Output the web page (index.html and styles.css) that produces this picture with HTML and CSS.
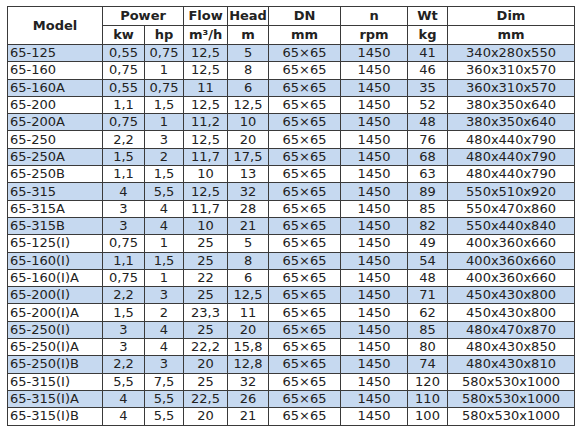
FILE: index.html
```html
<!DOCTYPE html>
<html>
<head>
<meta charset="utf-8">
<link rel="stylesheet" href="styles.css">
</head>
<body>
<table class="spec">
<colgroup>
<col class="c-model"><col class="c-kw"><col class="c-hp"><col class="c-flow"><col class="c-head"><col class="c-dn"><col class="c-n"><col class="c-wt"><col class="c-dim">
</colgroup>
<thead>
<tr><th rowspan="2">Model</th><th colspan="2">Power</th><th>Flow</th><th>Head</th><th>DN</th><th>n</th><th>Wt</th><th>Dim</th></tr>
<tr><th>kw</th><th>hp</th><th>m³/h</th><th>m</th><th>mm</th><th>rpm</th><th>kg</th><th>mm</th></tr>
</thead>
<tbody>
<tr><td>65-125</td><td>0,55</td><td>0,75</td><td>12,5</td><td>5</td><td>65×65</td><td>1450</td><td>41</td><td>340x280x550</td></tr>
<tr><td>65-160</td><td>0,75</td><td>1</td><td>12,5</td><td>8</td><td>65×65</td><td>1450</td><td>46</td><td>360x310x570</td></tr>
<tr><td>65-160A</td><td>0,55</td><td>0,75</td><td>11</td><td>6</td><td>65×65</td><td>1450</td><td>35</td><td>360x310x570</td></tr>
<tr><td>65-200</td><td>1,1</td><td>1,5</td><td>12,5</td><td>12,5</td><td>65×65</td><td>1450</td><td>52</td><td>380x350x640</td></tr>
<tr><td>65-200A</td><td>0,75</td><td>1</td><td>11,2</td><td>10</td><td>65×65</td><td>1450</td><td>48</td><td>380x350x640</td></tr>
<tr><td>65-250</td><td>2,2</td><td>3</td><td>12,5</td><td>20</td><td>65×65</td><td>1450</td><td>76</td><td>480x440x790</td></tr>
<tr><td>65-250A</td><td>1,5</td><td>2</td><td>11,7</td><td>17,5</td><td>65×65</td><td>1450</td><td>68</td><td>480x440x790</td></tr>
<tr><td>65-250B</td><td>1,1</td><td>1,5</td><td>10</td><td>13</td><td>65×65</td><td>1450</td><td>63</td><td>480x440x790</td></tr>
<tr><td>65-315</td><td>4</td><td>5,5</td><td>12,5</td><td>32</td><td>65×65</td><td>1450</td><td>89</td><td>550x510x920</td></tr>
<tr><td>65-315A</td><td>3</td><td>4</td><td>11,7</td><td>28</td><td>65×65</td><td>1450</td><td>85</td><td>550x470x860</td></tr>
<tr><td>65-315B</td><td>3</td><td>4</td><td>10</td><td>21</td><td>65×65</td><td>1450</td><td>82</td><td>550x440x840</td></tr>
<tr><td>65-125(I)</td><td>0,75</td><td>1</td><td>25</td><td>5</td><td>65×65</td><td>1450</td><td>49</td><td>400x360x660</td></tr>
<tr><td>65-160(I)</td><td>1,1</td><td>1,5</td><td>25</td><td>8</td><td>65×65</td><td>1450</td><td>54</td><td>400x360x660</td></tr>
<tr><td>65-160(I)A</td><td>0,75</td><td>1</td><td>22</td><td>6</td><td>65×65</td><td>1450</td><td>48</td><td>400x360x660</td></tr>
<tr><td>65-200(I)</td><td>2,2</td><td>3</td><td>25</td><td>12,5</td><td>65×65</td><td>1450</td><td>71</td><td>450x430x800</td></tr>
<tr><td>65-200(I)A</td><td>1,5</td><td>2</td><td>23,3</td><td>11</td><td>65×65</td><td>1450</td><td>62</td><td>450x430x800</td></tr>
<tr><td>65-250(I)</td><td>3</td><td>4</td><td>25</td><td>20</td><td>65×65</td><td>1450</td><td>85</td><td>480x470x870</td></tr>
<tr><td>65-250(I)A</td><td>3</td><td>4</td><td>22,2</td><td>15,8</td><td>65×65</td><td>1450</td><td>80</td><td>480x430x850</td></tr>
<tr><td>65-250(I)B</td><td>2,2</td><td>3</td><td>20</td><td>12,8</td><td>65×65</td><td>1450</td><td>74</td><td>480x430x810</td></tr>
<tr><td>65-315(I)</td><td>5,5</td><td>7,5</td><td>25</td><td>32</td><td>65×65</td><td>1450</td><td>120</td><td>580x530x1000</td></tr>
<tr><td>65-315(I)A</td><td>4</td><td>5,5</td><td>22,5</td><td>26</td><td>65×65</td><td>1450</td><td>110</td><td>580x530x1000</td></tr>
<tr><td>65-315(I)B</td><td>4</td><td>5,5</td><td>20</td><td>21</td><td>65×65</td><td>1450</td><td>100</td><td>580x530x1000</td></tr>
</tbody>
</table>
</body>
</html>
```
FILE: styles.css
```css
html, body {
  margin: 0;
  padding: 0;
  background: #ffffff;
}
body {
  padding: 6px 0 0 7px;
  font-family: "DejaVu Sans", Verdana, sans-serif;
  font-size: 13px;
  color: #222222;
}
.spec {
  border-collapse: collapse;
  table-layout: fixed;
  width: 567px;
}
.c-model { width: 95px; }
.c-kw { width: 42px; }
.c-hp { width: 39px; }
.c-flow { width: 44px; }
.c-head { width: 41px; }
.c-dn { width: 72px; }
.c-n { width: 67px; }
.c-wt { width: 40px; }
.c-dim { width: 127px; }
.spec th, .spec td {
  border: 1px solid #3a3a3a;
  padding: 0 1px;
  text-align: center;
  white-space: nowrap;
  overflow: hidden;
  line-height: 16px;
}
.spec th {
  font-weight: bold;
  height: 18px;
  background: #ffffff;
}
.spec td {
  height: 16.3px;
}
.spec td:first-child {
  text-align: left;
  padding-left: 2px;
}
.spec tbody tr:nth-child(odd) td {
  background: #c6d9f0;
}
```
